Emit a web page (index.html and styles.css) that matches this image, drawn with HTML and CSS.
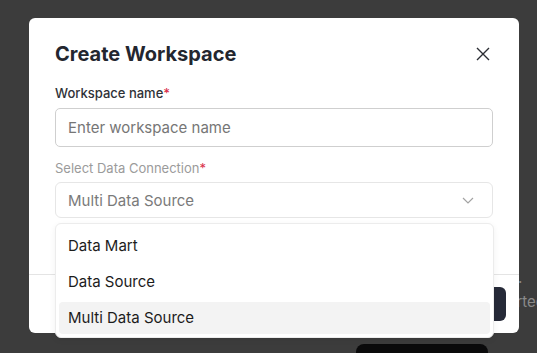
FILE: index.html
```html
<!DOCTYPE html>
<html lang="en">

<head>
    <meta charset="UTF-8">
    <meta name="viewport" content="width=device-width, initial-scale=1.0">
    <title>Create Workspace</title>
    <link rel="stylesheet" href="styles.css">
</head>

<body>
    <!-- page behind the overlay -->
    <div class="page">
        <span class="page-dot">.</span>
        <span class="page-text">tarted</span>
        <div class="page-button"></div>
    </div>

    <div class="modal">
        <div class="modal-header">
            <h2 class="modal-title">Create Workspace</h2>
            <button class="close" aria-label="Close">
                <svg width="14" height="14" viewBox="0 0 14 14">
                    <path d="M1 1L13 13M13 1L1 13" stroke="#2b2d33" stroke-width="1.4" fill="none" />
                </svg>
            </button>
        </div>
        <div class="modal-body">
            <label class="label">Workspace name<span class="req">*</span></label>
            <input class="input" type="text" placeholder="Enter workspace name">

            <label class="label label-muted">Select Data Connection<span class="req">*</span></label>
            <div class="select">
                <span class="select-value">Multi Data Source</span>
                <svg class="chevron" width="12" height="7" viewBox="0 0 12 7">
                    <path d="M1 1L6 6L11 1" stroke="#a3a3a3" stroke-width="1.2" fill="none" />
                </svg>
                <ul class="menu">
                    <li class="menu-item">Data Mart</li>
                    <li class="menu-item">Data Source</li>
                    <li class="menu-item active">Multi Data Source</li>
                </ul>
            </div>
        </div>
        <div class="modal-footer">
            <button class="btn-primary">Create</button>
        </div>
    </div>
</body>

</html>
```

FILE: styles.css
```css
* {
    margin: 0;
    padding: 0;
    box-sizing: border-box;
}

ul {
    list-style: none;
}

html,
body {
    overflow: hidden;
}

body {
    width: 537px;
    height: 353px;
    background: #3c3c3c;
    font-family: Inter, "Liberation Sans", sans-serif;
    position: relative;
    padding: 18px 0 0 29px;
}

.page-dot {
    position: absolute;
    left: 518px;
    top: 268px;
    color: #8a8a8a;
    font-size: 15px;
}

.page-text {
    position: absolute;
    left: 503px;
    top: 292px;
    color: #8a8a8a;
    font-size: 15px;
}

.page-button {
    position: absolute;
    left: 356px;
    top: 344px;
    width: 132px;
    height: 9px;
    background: #0a0a0b;
    border-radius: 8px 8px 0 0;
}

.modal {
    position: relative;
    width: 490px;
    background: #fff;
    border-radius: 6px;
}

.modal-header {
    display: flex;
    justify-content: space-between;
    align-items: center;
    padding: 22px 29px 0 26px;
}

.modal-title {
    font-size: 20px;
    line-height: 28px;
    font-weight: 700;
    color: #23262f;
}

.close {
    border: 0;
    background: none;
    display: flex;
    margin-top: -1px;
}

.modal-body {
    padding: 15px 26px 56px;
    display: flex;
    flex-direction: column;
}

.label {
    font-size: 13px;
    line-height: 20px;
    font-weight: 500;
    color: #2f3137;
    margin-bottom: 5px;
}

.label-muted {
    color: #9b9b9b;
    font-weight: 400;
    margin-top: 11px;
    margin-bottom: 4px;
}

.req {
    color: #d9304a;
}

.input {
    height: 39px;
    border: 1px solid #cfcfcf;
    border-radius: 5px;
    padding: 0 12px;
    font-family: inherit;
    font-size: 15px;
    color: #222;
    outline: none;
}

.input::placeholder {
    color: #767676;
}

.select {
    position: relative;
    height: 36px;
    border: 1px solid #e6e6e6;
    border-radius: 6px;
    padding: 0 18px 0 12px;
    display: flex;
    align-items: center;
    justify-content: space-between;
}

.select-value {
    font-size: 15px;
    color: #7a7a7a;
}

.menu {
    position: absolute;
    left: -1px;
    top: 40px;
    width: 439px;
    background: #fff;
    border: 1px solid #ececec;
    border-radius: 6px;
    box-shadow: 0 2px 6px rgba(0, 0, 0, 0.06);
    padding: 6px 3px 3px;
    display: flex;
    flex-direction: column;
    gap: 4px;
    z-index: 2;
}

.menu-item {
    height: 32px;
    line-height: 32px;
    padding: 0 9px;
    font-size: 15px;
    color: #1c1c1c;
    border-radius: 4px;
}

.menu-item.active {
    background: #f3f3f3;
}

.modal-footer {
    border-top: 1px solid #e4e4e4;
    padding: 12px 13px 12px;
    display: flex;
    justify-content: flex-end;
}

.btn-primary {
    height: 34px;
    padding: 0 20px;
    border: 0;
    border-radius: 6px;
    background: #262a38;
    color: #fff;
    font-family: inherit;
    font-size: 14px;
    font-weight: 500;
}
```
